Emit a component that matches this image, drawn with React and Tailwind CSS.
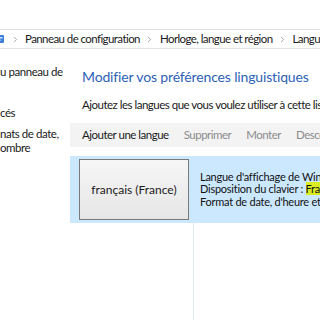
import { ChevronRight } from "lucide-react";

const font = { fontFamily: '"Segoe UI", Lato, "Liberation Sans", sans-serif' };

function Crumb({ children }) {
    return (
        <>
            <span className="w-[20px] shrink-0 flex justify-center text-[#8a8a8a]">
                <ChevronRight size={9} strokeWidth={2} />
            </span>
            <span className="shrink-0">{children}</span>
        </>
    );
}

export default function App() {
    return (
        <div
            className="w-[320px] h-[320px] bg-white overflow-hidden flex flex-col text-[#1a1a1a]"
            style={font}
        >
            {/* top spacer */}
            <div className="h-[29px] shrink-0" />

            {/* breadcrumb */}
            <div className="h-[20px] shrink-0 border-y border-[#e2e2e2] flex items-center whitespace-nowrap text-[11.5px] tracking-[-0.58px] leading-none overflow-hidden">
                <span className="w-[5px] h-[12px] overflow-hidden flex justify-end shrink-0">
                    <svg width="12" height="12" viewBox="0 0 12 12" className="shrink-0">
                        <rect x="1" y="2" width="10" height="8" rx="1" fill="#3d7fd6" />
                        <rect x="2.5" y="4" width="7" height="1.5" fill="#cfe3fb" />
                        <rect x="2.5" y="6.5" width="5" height="1.5" fill="#cfe3fb" />
                    </svg>
                </span>
                <Crumb>Panneau de configuration</Crumb>
                <Crumb>Horloge, langue et région</Crumb>
                <Crumb>Langue</Crumb>
            </div>

            {/* body */}
            <div className="flex-1 flex min-h-0">
                {/* sidebar */}
                <div className="w-[70px] shrink-0 text-[11.5px] tracking-[-0.45px] leading-[14px] whitespace-nowrap overflow-hidden">
                    <div className="mt-[16px]">u panneau de</div>
                    <div className="mt-[27px]">cés</div>
                    <div className="mt-[7px]">nats de date,</div>
                    <div>ombre</div>
                </div>

                {/* main */}
                <div className="flex-1 flex flex-col whitespace-nowrap overflow-hidden">
                    <div className="pt-[18px] pl-[12px] h-[38px] text-[14px] tracking-[-0.15px] leading-[20px] text-[#2d62b6]">
                        Modifier vos préférences linguistiques
                    </div>
                    <div className="mt-[10px] pl-[12px] text-[11.5px] tracking-[-0.5px] leading-[16px]">
                        Ajoutez les langues que vous voulez utiliser à cette liste
                    </div>
                    <div className="mt-[10px] h-[24px] bg-[#f3f3f3] flex items-center pl-[12px] gap-[15px] text-[11.5px] tracking-[-0.5px]">
                        <span>Ajouter une langue</span>
                        <span className="text-[#8c8c8c]">Supprimer</span>
                        <span className="text-[#8c8c8c]">Monter</span>
                        <span className="text-[#8c8c8c]">Descendre</span>
                    </div>

                    <div className="mt-[9px] h-[67px] bg-[#cce8ff] flex items-center pl-[9px]">
                        <div className="w-[110px] h-[61px] shrink-0 border border-[#7a7a7a] bg-gradient-to-b from-[#f6f6f6] to-[#e6e6e6] flex items-center justify-center text-[12px]">
                            français (France)
                        </div>
                        <div className="ml-[11px] text-[11px] tracking-[-0.25px] leading-[12.5px] text-[#111]">
                            <div>Langue d'affichage de Windows : activée</div>
                            <div>
                                Disposition du clavier :{" "}
                                <span className="bg-[#d9ec22]">Français</span>
                            </div>
                            <div>Format de date, d'heure et de nombre</div>
                        </div>
                    </div>

                    <div className="flex-1 flex">
                        <div className="w-[124px] border-r border-[#e3edf9]" />
                    </div>
                </div>
            </div>
        </div>
    );
}
